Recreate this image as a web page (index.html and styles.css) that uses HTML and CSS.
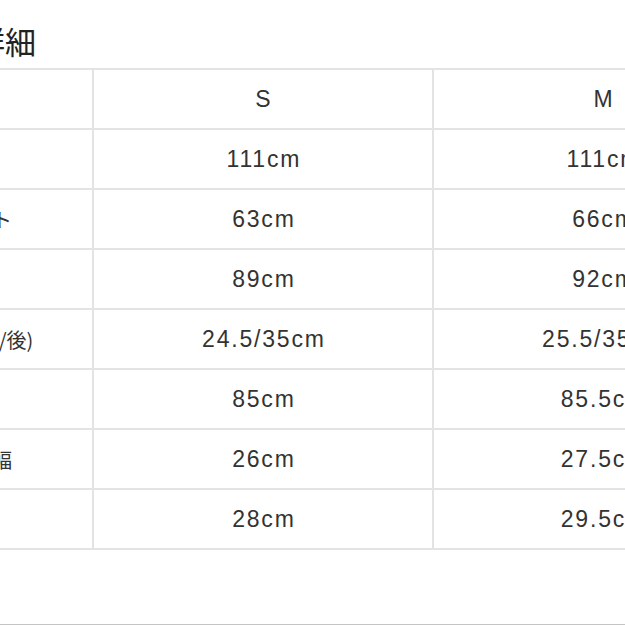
FILE: index.html
```html
<!DOCTYPE html>
<html lang="ja">
<head>
<meta charset="utf-8">
<link rel="stylesheet" href="styles.css">
</head>
<body>
<div class="page">
  <h2 class="title">詳細</h2>
  <table class="sizes">
    <tr><th class="label">サイズ</th><td>S</td><td>M</td></tr>
    <tr><th class="label">総丈</th><td>111cm</td><td>111cm</td></tr>
    <tr><th class="label">ウエスト</th><td>63cm</td><td>66cm</td></tr>
    <tr><th class="label">ヒップ</th><td>89cm</td><td>92cm</td></tr>
    <tr><th class="label">股上(前/後)</th><td>24.5/35cm</td><td>25.5/35cm</td></tr>
    <tr><th class="label">股下</th><td>85cm</td><td>85.5cm</td></tr>
    <tr><th class="label">わたり幅</th><td>26cm</td><td>27.5cm</td></tr>
    <tr><th class="label">裾幅</th><td>28cm</td><td>29.5cm</td></tr>
  </table>
  <div class="divider"></div>
</div>
</body>
</html>
```

FILE: styles.css
```css
html, body {
  margin: 0;
  padding: 0;
  overflow: hidden;
  background: #ffffff;
}
body {
  width: 625px;
  height: 625px;
  font-family: "Liberation Sans", "Noto Sans CJK JP", sans-serif;
  color: #333333;
}
.page {
  margin-left: -87px;
  width: 900px;
}
.title {
  margin: 0 0 12px 61px;
  padding-top: 25px;
  height: 31px;
  font-family: "Noto Sans CJK JP", sans-serif;
  font-size: 31px;
  line-height: 31px;
  font-weight: 400;
  color: #222222;
}
.sizes {
  border-collapse: collapse;
  table-layout: fixed;
}
.sizes th, .sizes td {
  border: 2px solid #e3e3e3;
  height: 58px;
  padding: 0;
  vertical-align: middle;
}
.sizes .label {
  width: 160px;
  padding-left: 17px;
  text-align: left;
  font-family: "Noto Sans CJK JP", sans-serif;
  font-size: 20px;
  font-weight: 400;
  color: #333333;
  white-space: nowrap;
}
.sizes td {
  width: 338px;
  text-align: center;
  font-size: 23px;
  letter-spacing: 1.8px;
  text-indent: 1.8px;
  white-space: nowrap;
}
.divider {
  margin-top: 74px;
  height: 1px;
  background: #c4c4c4;
}
```
